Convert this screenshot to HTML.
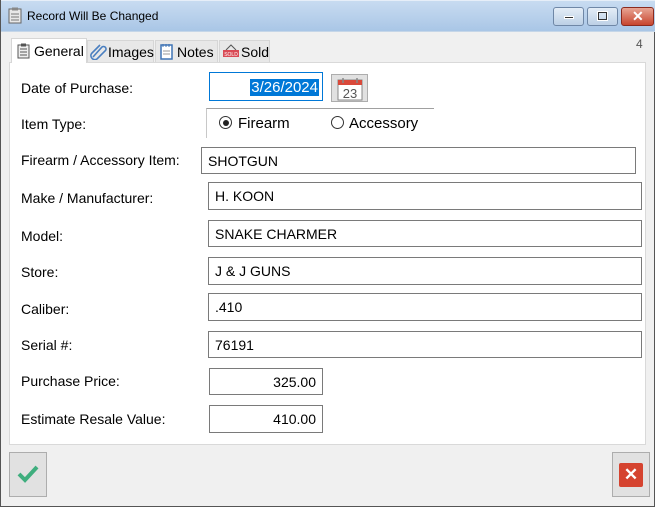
<!DOCTYPE html>
<html><head><meta charset="utf-8"><style>
*{box-sizing:border-box;margin:0;padding:0}
body{width:655px;height:507px;overflow:hidden;background:#fff;font-family:"Liberation Sans",sans-serif;font-size:14px;color:#000;position:relative}
.win{position:absolute;left:0;top:0;width:655px;height:507px;background:#f0f0f0;border:1px solid #555;border-top:none}
.title{position:absolute;left:0;top:0;width:655px;height:32px;background:linear-gradient(#c9dcf1,#a9c6e6);border-bottom:1px solid #c5d6e8;box-shadow:inset 0 1px 0 #e6eef8}
.title span{position:absolute;left:26px;top:9px;font-size:12px;color:#000}
.ab{position:absolute}
.tb{position:absolute;top:7px;height:19px;border:1px solid #6f87a6;border-radius:3px;background:linear-gradient(#e4edf7,#bcd0e6)}
.tab{position:absolute;top:40px;height:22px;background:#e8e8e8;border:1px solid #d6d6d6;border-bottom:none;font-size:14px;padding-top:2px}
.panel{position:absolute;left:8px;top:62px;width:637px;height:383px;background:#fff;border:1px solid #d9d9d9}
.lbl{position:absolute;left:20px;font-size:14px}
.inp{position:absolute;border:1px solid #7a7a7a;background:#fff;font-size:14px;padding:5px 0 0 6px}
.r{text-align:right;padding-right:6px}
.btn{position:absolute;top:452px;width:38px;height:45px;background:#e1e1e1;border:1px solid #adadad}
</style></head><body>
<div class="win">
<div class="title">
<svg class="ab" style="left:7px;top:7px" width="14" height="17" viewBox="0 0 14 17"><rect x="1" y="2" width="12" height="14" fill="#e8e8e8" stroke="#666"/><rect x="4" y="0.5" width="6" height="3" fill="#888"/><path d="M3 7h8M3 10h8M3 13h8" stroke="#777"/></svg>
<span>Record Will Be Changed</span>
<div class="tb" style="left:552px;width:31px"><div class="ab" style="left:10px;top:8px;width:10px;height:3px;background:#333;border:1px solid #fff"></div></div>
<div class="tb" style="left:586px;width:31px"><div class="ab" style="left:10px;top:4px;width:9px;height:8px;border:1px solid #333;box-shadow:0 0 0 1px #fff"></div></div>
<div class="tb" style="left:620px;width:33px;border-color:#8b2a1e;background:linear-gradient(#e8a594,#c7452e)"><div class="ab" style="left:10px;top:0px;color:#fff;font-weight:bold;font-size:14px">✕</div></div>
</div>
<div class="ab" style="left:635px;top:37px;font-size:12px;color:#555">4</div>
<div class="tab" style="left:10px;width:76px;top:38px;height:25px;background:#fff;z-index:2;padding-top:4px">
<svg class="ab" style="left:5px;top:4px" width="13" height="16" viewBox="0 0 13 16"><rect x="1" y="2" width="11" height="13" fill="#eee" stroke="#555"/><rect x="4" y="0.5" width="5" height="3" fill="#555"/><path d="M3 6h7M3 9h7M3 12h7" stroke="#555"/></svg>
<span style="position:absolute;left:22px;top:4px">General</span></div>
<div class="tab" style="left:86px;width:67px">
<svg class="ab" style="left:2px;top:2px" width="18" height="17" viewBox="0 0 18 17"><path d="M3 14L12 4a2.5 2.5 0 0 1 3.5 3.5L7 16a4 4 0 0 1-5.5-5.5L10 2" fill="none" stroke="#4a7fc0" stroke-width="1.6"/></svg>
<span style="position:absolute;left:20px;top:3px">Images</span></div>
<div class="tab" style="left:154px;width:63px">
<svg class="ab" style="left:4px;top:2px" width="13" height="17" viewBox="0 0 13 17"><rect x="1" y="2" width="11" height="14" fill="#fff" stroke="#3f74b5" stroke-width="1.5"/><path d="M3 1v3M6 1v3M9 1v3" stroke="#3f74b5"/><path d="M3 8h7M3 11h7" stroke="#999"/></svg>
<span style="position:absolute;left:21px;top:3px">Notes</span></div>
<div class="tab" style="left:218px;width:51px">
<svg class="ab" style="left:2px;top:3px" width="18" height="14" viewBox="0 0 18 14"><path d="M4 6L9 1L14 6" fill="none" stroke="#555"/><rect x="1" y="6" width="16" height="7" fill="#d94a55"/><text x="9" y="12" font-size="5" fill="#fff" text-anchor="middle" font-family="Liberation Sans">SOLD</text></svg>
<span style="position:absolute;left:21px;top:3px">Sold</span></div>
<div class="panel"></div>

<div class="lbl" style="top:80px">Date of Purchase:</div>
<div class="ab" style="left:208px;top:72px;width:114px;height:29px;border:1px solid #0078d7;background:#fff"><span class="ab" style="right:3px;top:6px;background:#0078d7;color:#fff;font-size:15px;padding:0 1px">3/26/2024</span></div>
<div class="ab" style="left:330px;top:74px;width:37px;height:28px;background:#e1e1e1;border:1px solid #adadad">
<svg class="ab" style="left:5px;top:2px" width="26" height="24" viewBox="0 0 26 24"><rect x="1" y="3" width="24" height="20" fill="#fff" stroke="#888"/><rect x="1" y="3" width="24" height="5" fill="#d9493a"/><path d="M6 1v5M20 1v5" stroke="#888" stroke-width="1.5"/><text x="13" y="21" font-size="13" fill="#555" text-anchor="middle" font-family="Liberation Sans">23</text></svg></div>

<div class="lbl" style="top:116px">Item Type:</div>
<div class="ab" style="left:205px;top:108px;width:228px;height:30px;border-top:1px solid #a0a0a0;border-left:1px solid #c8c8c8"></div>
<div class="ab" style="left:218px;top:116px;width:13px;height:13px;border:1px solid #333;border-radius:50%"><div class="ab" style="left:2.5px;top:2.5px;width:6px;height:6px;background:#222;border-radius:50%"></div></div>
<div class="ab" style="left:237px;top:115px;font-size:15px">Firearm</div>
<div class="ab" style="left:330px;top:116px;width:13px;height:13px;border:1px solid #333;border-radius:50%"></div>
<div class="ab" style="left:348px;top:115px;font-size:15px">Accessory</div>

<div class="lbl" style="top:152px">Firearm / Accessory Item:</div>
<div class="inp" style="left:200px;top:147px;width:435px;height:27px">SHOTGUN</div>
<div class="lbl" style="top:190px">Make / Manufacturer:</div>
<div class="inp" style="left:207px;top:182px;width:434px;height:28px">H. KOON</div>
<div class="lbl" style="top:228px">Model:</div>
<div class="inp" style="left:207px;top:220px;width:434px;height:27px">SNAKE CHARMER</div>
<div class="lbl" style="top:264px">Store:</div>
<div class="inp" style="left:207px;top:257px;width:434px;height:28px">J &amp; J GUNS</div>
<div class="lbl" style="top:301px">Caliber:</div>
<div class="inp" style="left:207px;top:293px;width:434px;height:28px">.410</div>
<div class="lbl" style="top:337px">Serial #:</div>
<div class="inp" style="left:207px;top:331px;width:434px;height:27px">76191</div>
<div class="lbl" style="top:373px">Purchase Price:</div>
<div class="inp r" style="left:208px;top:368px;width:114px;height:27px">325.00</div>
<div class="lbl" style="top:411px">Estimate Resale Value:</div>
<div class="inp r" style="left:208px;top:405px;width:114px;height:28px">410.00</div>

<div class="btn" style="left:8px"><svg class="ab" style="left:6px;top:11px" width="24" height="20" viewBox="0 0 24 20"><path d="M3 10l6 6L21 3" fill="none" stroke="#3fae7e" stroke-width="4"/></svg></div>
<div class="btn" style="left:611px"><div class="ab" style="left:6px;top:10px;width:24px;height:24px;background:#d5432f;border-radius:2px;color:#fff;font-weight:bold;font-size:17px;text-align:center;line-height:24px">✕</div></div>
</div>
</body></html>
